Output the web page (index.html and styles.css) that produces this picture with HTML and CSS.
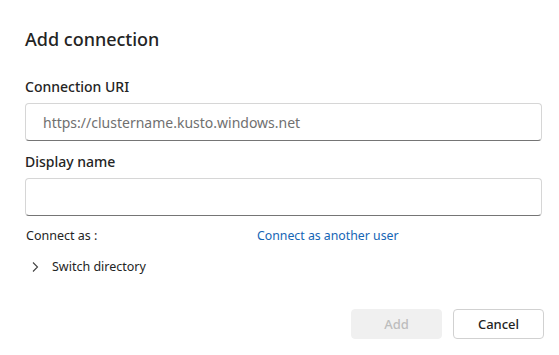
FILE: index.html
```html
<!DOCTYPE html>
<html lang="en">
<head>
    <meta charset="UTF-8">
    <meta name="viewport" content="width=device-width, initial-scale=1.0">
    <title>Add connection</title>
    <link rel="stylesheet" href="styles.css">
</head>
<body>
    <div class="dialog">
        <h2 class="dialog-title">Add connection</h2>
        <form id="connectionForm">
            <div class="form-group">
                <label for="uri">Connection URI</label>
                <input type="text" id="uri" name="uri" placeholder="https://clustername.kusto.windows.net">
            </div>
            <div class="form-group">
                <label for="displayName">Display name</label>
                <input type="text" id="displayName" name="displayName">
            </div>
            <div class="connect-row">
                <span>Connect as :</span>
                <a class="link" href="#">Connect as another user</a>
            </div>
            <button type="button" class="expander">
                <svg class="chevron" width="12" height="12" viewBox="0 0 12 12">
                    <path d="M4 1.5 L8.5 6 L4 10.5" fill="none" stroke="#424242" stroke-width="1.1"/>
                </svg>
                Switch directory
            </button>
            <div class="dialog-actions">
                <button type="submit" class="btn btn-primary" disabled>Add</button>
                <button type="button" class="btn">Cancel</button>
            </div>
        </form>
    </div>
</body>
</html>
```

FILE: styles.css
```css
body {
    font-family: "Noto Sans", "Open Sans", sans-serif;
    background-color: white;
    color: #242424;
    margin: 0;
    padding: 0;
}
.dialog {
    padding: 25px 15px 0 25px;
}
.dialog-title {
    font-size: 18px;
    font-weight: 500;
    line-height: 28px;
    margin: 0 0 23px 0;
}
.form-group {
    display: flex;
    flex-direction: column;
    margin-bottom: 10px;
}
label {
    font-size: 14px;
    font-weight: 500;
    line-height: 22px;
    margin-bottom: 5px;
}
input {
    height: 38px;
    box-sizing: border-box;
    width: 517px;
    padding: 0 17px;
    font-family: inherit;
    font-size: 14px;
    color: #242424;
    border: 1px solid #d6d6d6;
    border-bottom-color: #757575;
    border-radius: 4px;
    outline: none;
}
input::placeholder {
    color: #707070;
}
.connect-row {
    display: grid;
    grid-template-columns: 231px auto;
    font-size: 12.5px;
    line-height: 20px;
    margin-top: 8px;
    padding-left: 1px;
}
.link {
    color: #1465b5;
    text-decoration: none;
    font-size: 12.3px;
}
.expander {
    display: flex;
    align-items: center;
    gap: 11px;
    background: none;
    border: none;
    padding: 0 0 0 4px;
    margin-top: 11px;
    font-family: inherit;
    font-size: 12.5px;
    color: #242424;
    line-height: 20px;
    cursor: pointer;
}
.dialog-actions {
    display: flex;
    justify-content: flex-end;
    gap: 11px;
    margin-top: 32px;
    width: 519px;
}
.btn {
    width: 91px;
    height: 30px;
    border: 1px solid #d1d1d1;
    border-radius: 4px;
    background-color: white;
    font-family: inherit;
    font-size: 13px;
    font-weight: 500;
    color: #242424;
    cursor: pointer;
}
.btn-primary:disabled {
    background-color: #f0f0f0;
    border-color: #f0f0f0;
    color: #bdbdbd;
    cursor: default;
}
```
